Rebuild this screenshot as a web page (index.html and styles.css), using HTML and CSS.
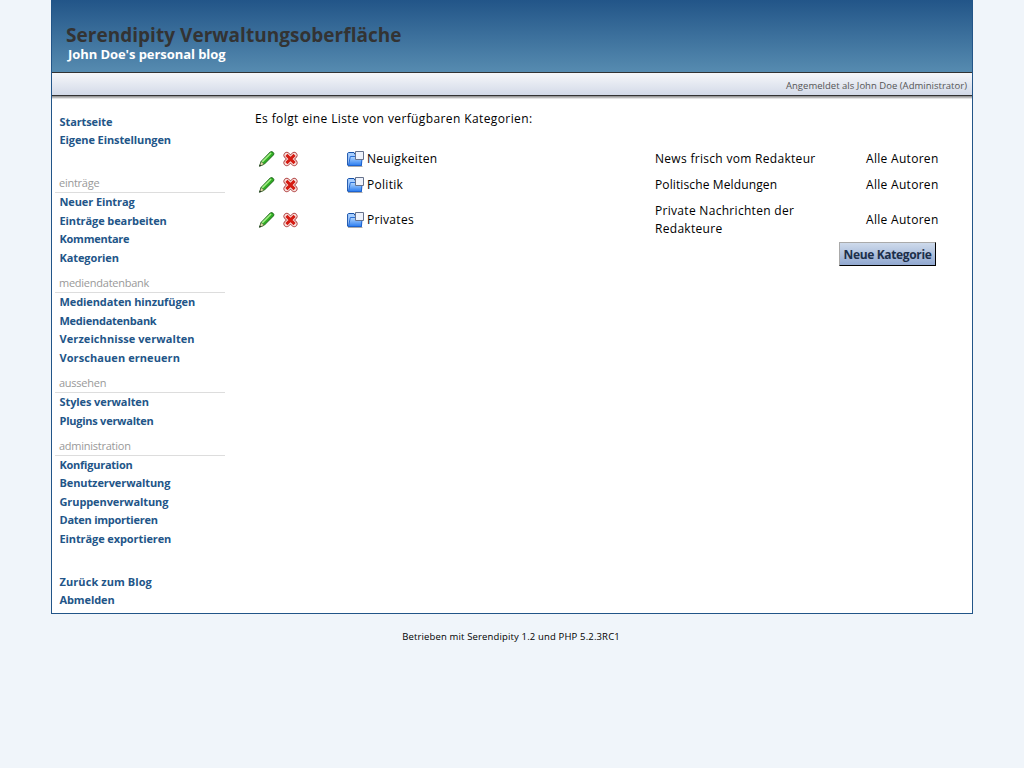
FILE: index.html
```html
<!DOCTYPE html>
<html lang="de">
<head>
<meta charset="utf-8">
<title>Serendipity Verwaltungsoberfläche</title>
<link rel="stylesheet" href="styles.css">
</head>
<body>
<svg width="0" height="0" class="defs">
  <defs>
    <linearGradient id="blue" x1="0" y1="0" x2="0" y2="1"><stop offset="0" stop-color="#b4d8ff"/><stop offset="1" stop-color="#2a7cf0"/></linearGradient>
    <symbol id="pencil" viewBox="0 0 16 16">
      <path d="M1 15.2L2.6 10.4L11.8.9Q13-.1 14.6 1.3Q16 2.6 15 3.9L5.7 13.3Z" fill="#2fae24" stroke="#1a5c14" stroke-width=".9"/>
      <path d="M3.7 10.9L12.6 2" stroke="#a4ee86" stroke-width="1.5"/>
      <path d="M1.4 14.8L2.8 10.8L5.4 13.2Z" fill="#f3e5b8" stroke="#596340" stroke-width=".5"/>
      <path d="M.7 15.5L1.4 13.6L2.8 14.8Z" fill="#222"/>
    </symbol>
    <symbol id="cross" viewBox="0 0 16 16">
      <path d="M4.3 4.3L11.7 11.7M11.7 4.3L4.3 11.7" stroke="#b44b4b" stroke-width="6.6" stroke-linecap="round"/>
      <path d="M4.3 4.3L11.7 11.7M11.7 4.3L4.3 11.7" stroke="#fae4e0" stroke-width="5" stroke-linecap="round"/>
      <path d="M3.9 3.9L12.1 12.1M12.1 3.9L3.9 12.1" stroke="#d51b12" stroke-width="3"/>
    </symbol>
    <symbol id="folder" viewBox="0 0 17 16">
      <path d="M1 15.5H15.5" stroke="#aaa"/>
      <path d="M.6 14.2V2.2L1.6 1.5H7L8 3.5H14.5V14.4H1Z" fill="#a6ceff" stroke="#1550a8"/>
      <path d="M1.5 14.5L3.3 5.5H8.5L9.5 8H15L14.4 14.5Z" fill="url(#blue)" stroke="#1c62cf" stroke-width=".9"/>
      <path d="M8.5.5H16.5V8.5H8.5Z" fill="#eef2fb" stroke="#66728c"/>
    </symbol>
  </defs>
</svg>
<div class="page">
  <header class="banner">
    <h1>Serendipity Verwaltungsoberfläche</h1>
    <h2>John Doe's personal blog</h2>
  </header>
  <div class="infopane"><span>Angemeldet als John Doe (Administrator)</span></div>
  <div class="columns">
    <nav class="sidebar">
      <ul class="top"><li>Startseite</li><li>Eigene Einstellungen</li></ul>
      <h3>einträge</h3>
      <ul><li>Neuer Eintrag</li><li>Einträge bearbeiten</li><li class="narrow">Kommentare</li><li>Kategorien</li></ul>
      <h3>mediendatenbank</h3>
      <ul><li>Mediendaten hinzufügen</li><li class="narrow">Mediendatenbank</li><li class="wide">Verzeichnisse verwalten</li><li class="wide">Vorschauen erneuern</li></ul>
      <h3>aussehen</h3>
      <ul><li>Styles verwalten</li><li class="narrow">Plugins verwalten</li></ul>
      <h3>administration</h3>
      <ul><li class="narrow">Konfiguration</li><li>Benutzerverwaltung</li><li>Gruppenverwaltung</li><li class="narrow">Daten importieren</li><li>Einträge exportieren</li></ul>
      <ul class="bottom"><li class="wide">Zurück zum Blog</li><li>Abmelden</li></ul>
    </nav>
    <main>
      <p>Es folgt eine Liste von verfügbaren Kategorien:</p>
      <div class="list">
        <div class="row"><svg class="icon"><use href="#pencil"/></svg><svg class="icon del"><use href="#cross"/></svg><svg class="icon folder"><use href="#folder"/></svg><span class="name">Neuigkeiten</span><span class="desc">News frisch vom Redakteur</span><span class="author">Alle Autoren</span></div>
        <div class="row"><svg class="icon"><use href="#pencil"/></svg><svg class="icon del"><use href="#cross"/></svg><svg class="icon folder"><use href="#folder"/></svg><span class="name">Politik</span><span class="desc compact">Politische Meldungen</span><span class="author">Alle Autoren</span></div>
        <div class="row tall"><svg class="icon"><use href="#pencil"/></svg><svg class="icon del"><use href="#cross"/></svg><svg class="icon folder"><use href="#folder"/></svg><span class="name">Privates</span><span class="desc">Private Nachrichten der Redakteure</span><span class="author">Alle Autoren</span></div>
      </div>
      <button class="new">Neue Kategorie</button>
    </main>
  </div>
</div>
<footer>Betrieben mit Serendipity 1.2 und PHP 5.2.3RC1</footer>
</body>
</html>
```
FILE: styles.css
```css
* { box-sizing: border-box; }
body { margin: 0; background: #f0f5fa; color: #000; font: 12px/18px "Open Sans", "Noto Sans", sans-serif; }
.defs { position: absolute; }
h1, h2, h3, p, ul { margin: 0; padding: 0; list-style: none; }
.page { width: 922px; height: 614px; margin: 0 51px; background: #fff; border: 1px solid #225588; border-top: 0; }
.banner { height: 73px; padding: 24px 0 0 14px; background: linear-gradient(#225588, #568bb0); border-bottom: 1px solid #333; }
h1 { font-size: 19px; line-height: 22px; letter-spacing: .03px; color: #333; white-space: nowrap; }
h2 { padding-left: 2px; font-size: 13px; line-height: 17px; letter-spacing: -.07px; color: #fff; }
.infopane { height: 26px; background: linear-gradient(#f6f7fa, #d3dae8 22px, #333 22px, #333 23px, #999 23px, #999 24px, #bbb 24px, #bbb 25px, #e4e4e4 25px); display: flex; justify-content: flex-end; padding: 4px 5px 0 0; font-size: 9.5px; letter-spacing: .02px; color: #555; }
.columns { display: flex; }
.sidebar { width: 173px; padding: 13.6px 0 0 3px; font-size: 11px; }
.sidebar li { height: 18.6px; line-height: 18.6px; padding-left: 4.5px; font-weight: bold; letter-spacing: -.1px; color: #225588; white-space: nowrap; }
.sidebar .wide { letter-spacing: .08px; }
.sidebar .narrow { letter-spacing: -.25px; }
.sidebar .top { height: 54.8px; }
.sidebar h3 { height: 25.6px; padding: 6px 0 0 4px; line-height: 19px; font-size: 11px; font-weight: normal; letter-spacing: -.25px; color: #999; border-bottom: 1px solid #ddd; }
.sidebar .bottom { padding-top: 24px; }
main { padding: 11px 0 0 30px; width: 747px; }
p { letter-spacing: .39px; }
.list { padding: 18px 0 0 3px; letter-spacing: .3px; }
.row { display: flex; align-items: center; height: 26px; }
.row.tall { height: 44px; }
.icon { width: 17px; height: 16px; flex: none; fill: none; margin-bottom: 1px; }
.del { margin-left: 7px; }
.folder { margin-left: 48px; }
.name { width: 291px; padding-left: 3px; }
.desc { width: 211px; padding-right: 45px; }
.compact { letter-spacing: .12px; }
.author { white-space: nowrap; }
.new { display: block; width: 97px; height: 24px; margin: 0 0 0 584px; padding: 0; border: 1px solid; border-color: #aaa #000 #000 #aaa; background: linear-gradient(#cedaeb, #91a8d0); color: #1c2f4a; font: bold 12px "Open Sans", sans-serif; letter-spacing: -.35px; white-space: nowrap; }
footer { padding: 14px 2px 0 0; text-align: center; font-size: 9.5px; letter-spacing: .15px; }
```
